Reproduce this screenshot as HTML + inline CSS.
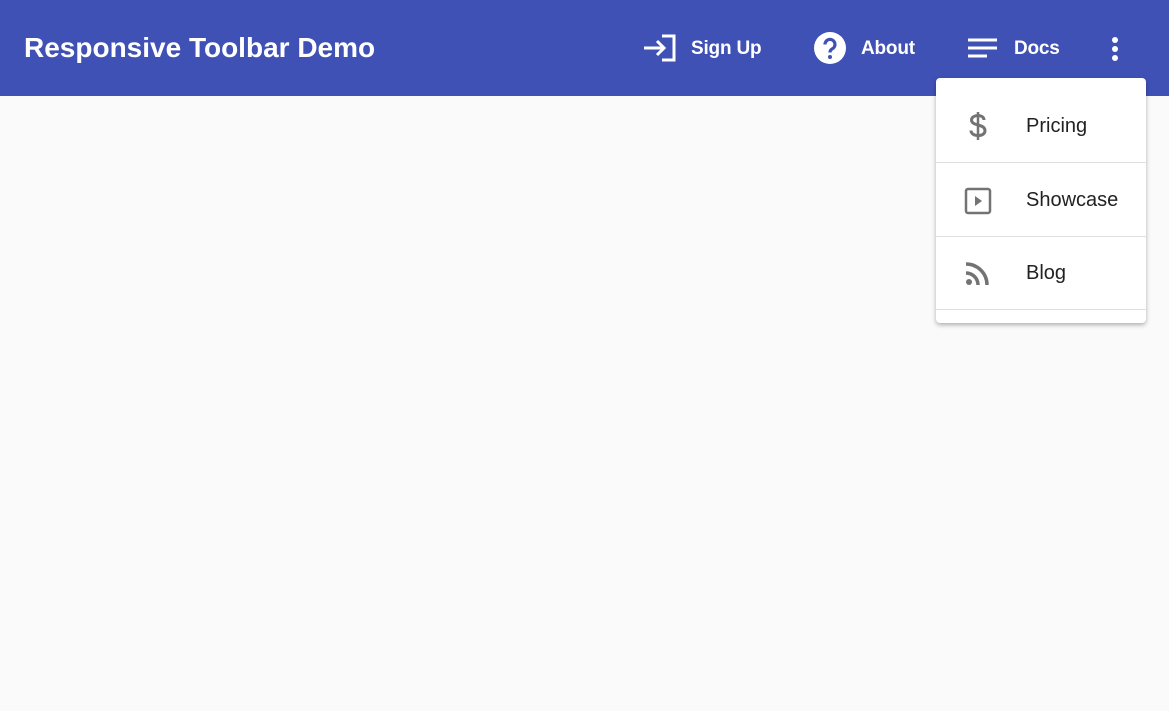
<!DOCTYPE html>
<html><head><style>
body{margin:0;width:1169px;height:711px;background:#fafafa;font-family:"Liberation Sans",sans-serif;overflow:hidden;position:relative}
.bar{position:absolute;left:0;top:0;width:1169px;height:96px;background:#3f51b5;color:#fff}
.title{position:absolute;left:24px;top:32px;font-size:28px;font-weight:bold;letter-spacing:0}
.nav{position:absolute;top:38px;font-size:19px;font-weight:bold;letter-spacing:-0.2px}
svg{position:absolute}
.menu{position:absolute;left:936px;top:78px;width:210px;height:245px;background:#fff;border-radius:4px;box-shadow:0 2px 5px rgba(0,0,0,.3)}
.item{position:absolute;left:0;width:210px;border-bottom:1px solid #e0e0e0;height:73px}
.item span{position:absolute;left:90px;font-size:20px;color:#222;top:26px}
</style></head><body>
<div class="bar">
<div class="title">Responsive Toolbar Demo</div>
<svg style="left:642px;top:32px" width="36" height="32" viewBox="0 0 36 32"><path d="M2 16H22M15 9l7 7-7 7" stroke="#fff" stroke-width="3" fill="none"/><path d="M20 4h12v24H20" stroke="#fff" stroke-width="3" fill="none"/></svg>
<div class="nav" style="left:691px">Sign Up</div>
<svg style="left:814px;top:32px" width="32" height="32" viewBox="0 0 32 32"><circle cx="16" cy="16" r="16" fill="#fff"/><path d="M11 12.5a5 5 0 1 1 7 4.5c-1.5.8-2 1.6-2 3.5" stroke="#3f51b5" stroke-width="3.2" fill="none"/><circle cx="16" cy="25" r="2" fill="#3f51b5"/></svg>
<div class="nav" style="left:861px">About</div>
<svg style="left:968px;top:38px" width="30" height="22" viewBox="0 0 30 22"><path d="M0 2h29M0 10h29M0 18h19" stroke="#fff" stroke-width="3"/></svg>
<div class="nav" style="left:1014px">Docs</div>
<svg style="left:1110px;top:36px" width="10" height="26" viewBox="0 0 10 26"><circle cx="5" cy="4" r="3" fill="#fff"/><circle cx="5" cy="13" r="3" fill="#fff"/><circle cx="5" cy="22" r="3" fill="#fff"/></svg>
</div>
<div class="menu">
<div class="item" style="top:11px"><span>Pricing</span>
<svg style="left:30px;top:22px" width="24" height="30" viewBox="0 0 24 30"><path d="M12 1v28" stroke="#737373" stroke-width="2.5"/><path d="M18 9c0-3-3-4.5-6-4.5S5.5 6 5.5 9s3 4 6.5 5 7 2 7 5.5-3 5-7 5S5 22.5 5 19.5" stroke="#737373" stroke-width="3" fill="none"/></svg></div>
<div class="item" style="top:85px"><span>Showcase</span>
<svg style="left:28px;top:24px" width="28" height="28" viewBox="0 0 28 28"><rect x="2" y="2" width="24" height="24" rx="2" stroke="#737373" stroke-width="2.5" fill="none"/><path d="M11 9v10l7-5z" fill="#737373"/></svg></div>
<div class="item" style="top:158px"><span>Blog</span>
<svg style="left:29px;top:24px" width="26" height="26" viewBox="0 0 26 26"><circle cx="4" cy="22" r="3" fill="#737373"/><path d="M1 13a12 12 0 0 1 12 12M1 4a21 21 0 0 1 21 21" stroke="#737373" stroke-width="3.5" fill="none"/></svg></div>
</div>
</body></html>
